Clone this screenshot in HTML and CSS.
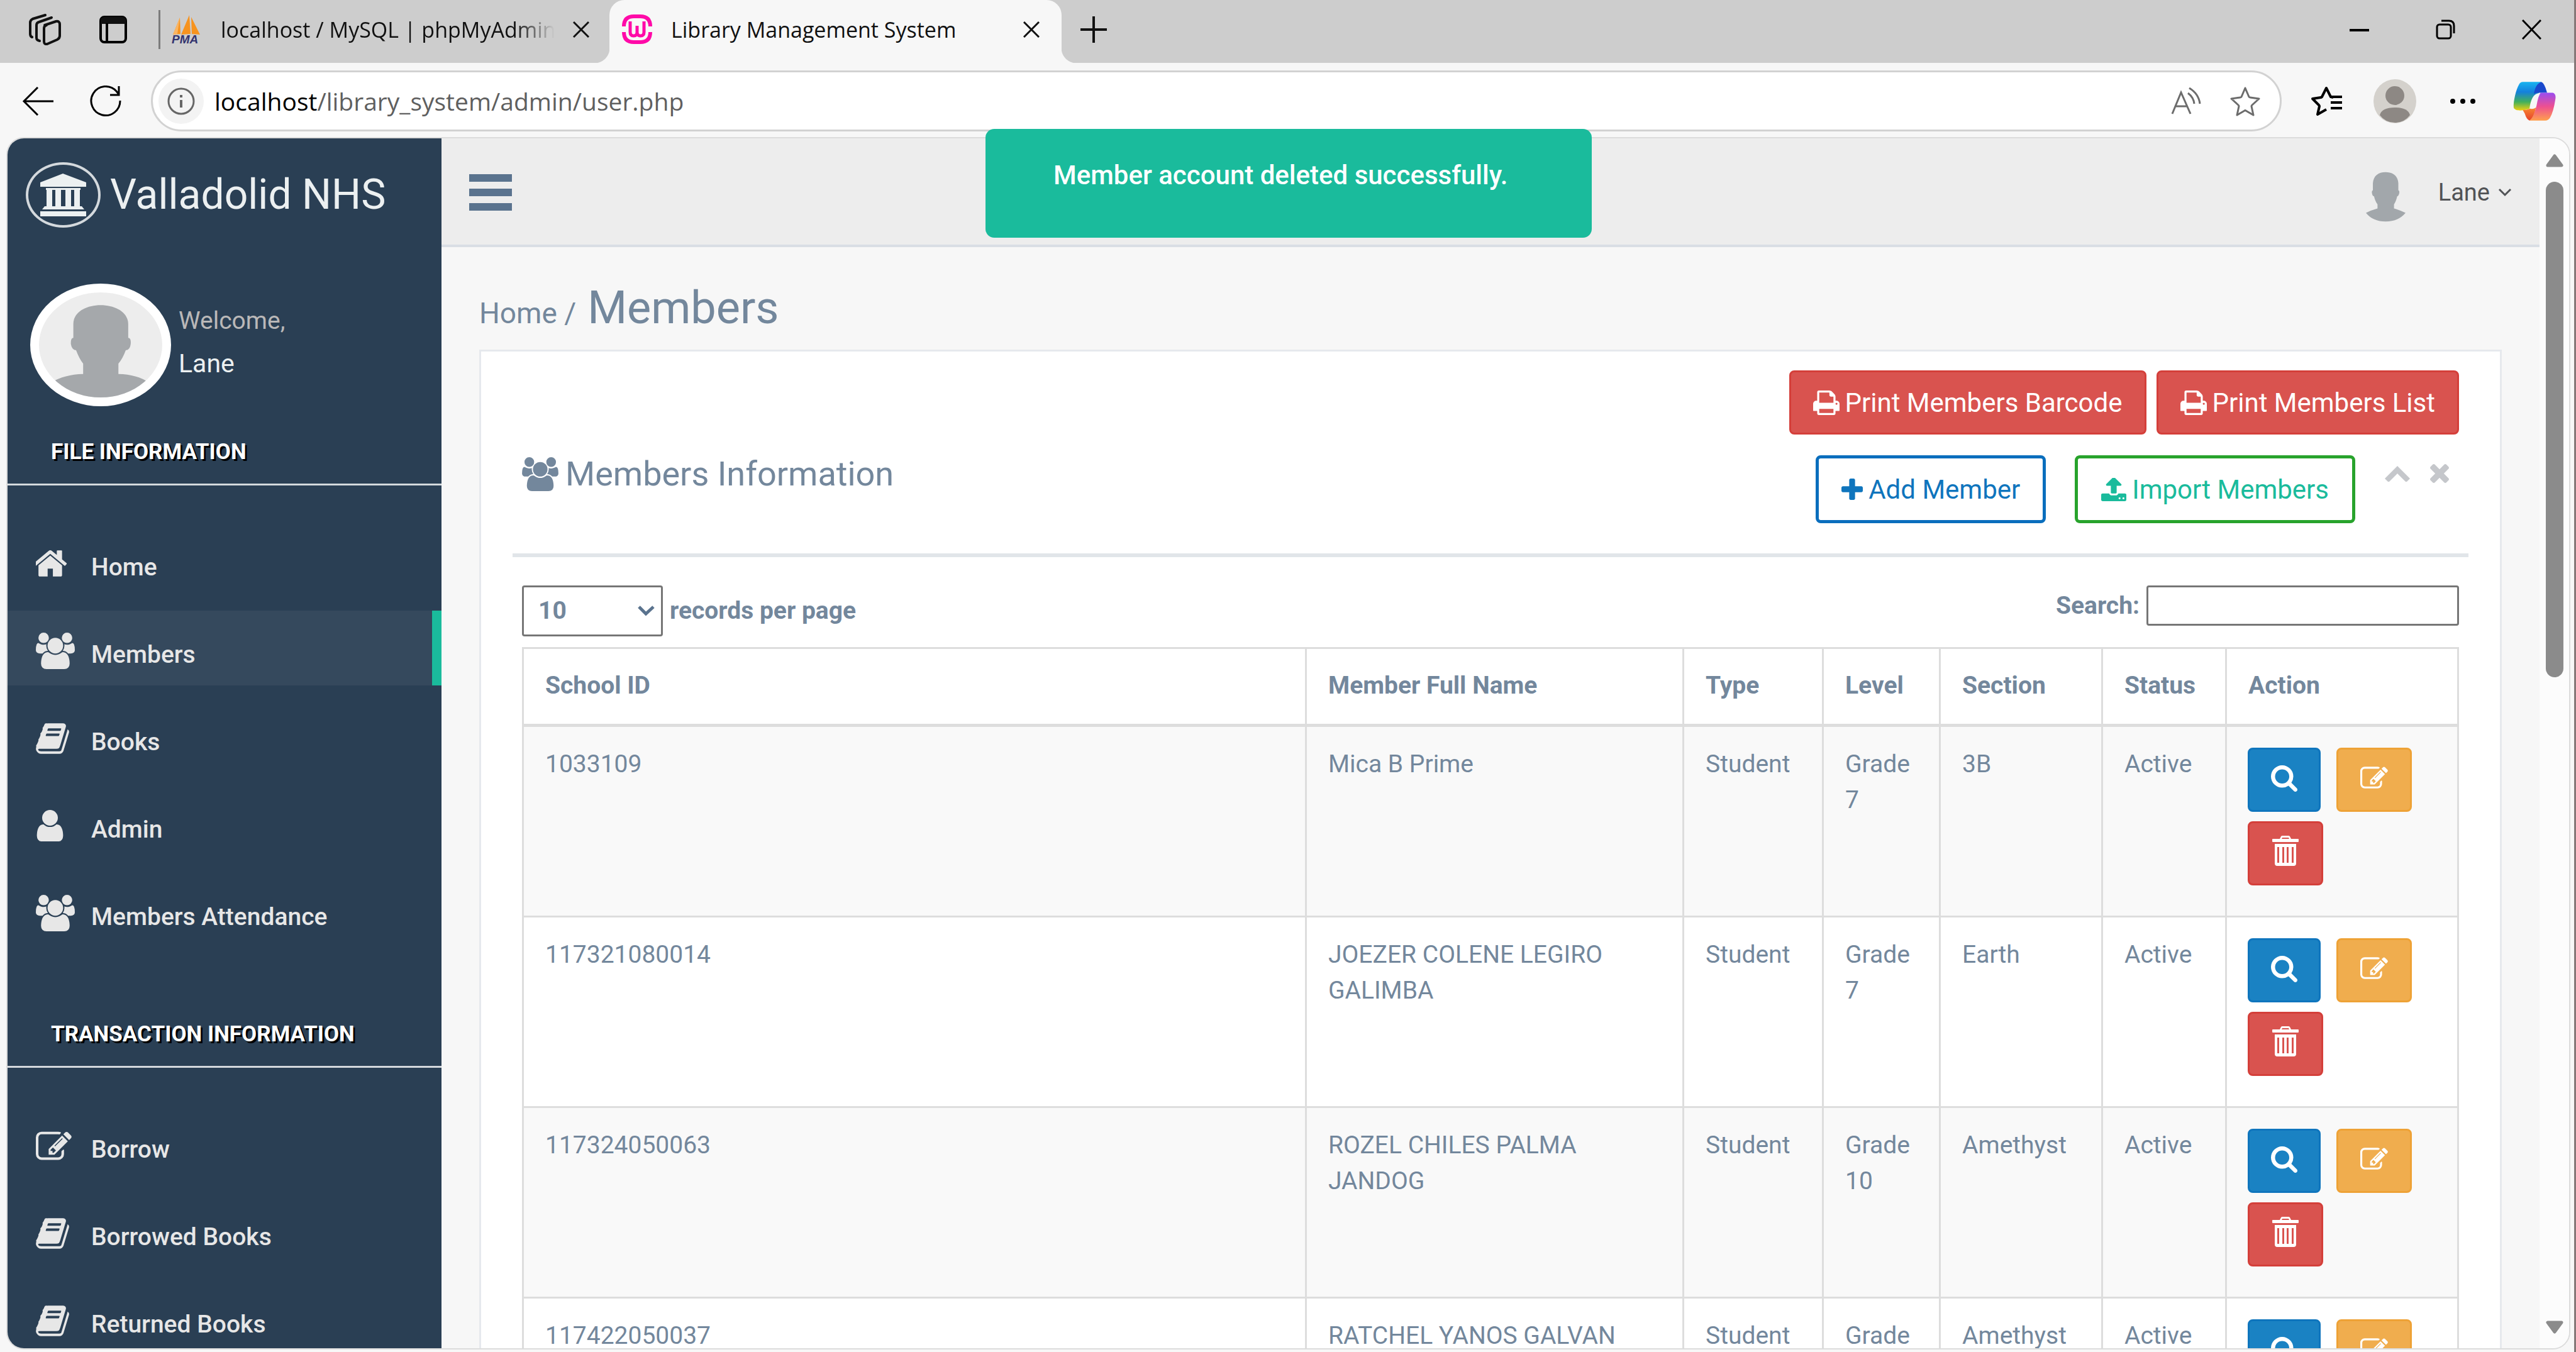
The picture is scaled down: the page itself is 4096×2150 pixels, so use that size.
FILE: index.html
```html
<!DOCTYPE html>
<html lang="en">
<head>
<meta charset="utf-8">
<title>Library Management System</title>
<link rel="stylesheet" href="styles.css">
</head>
<body>

<svg class="sprite" aria-hidden="true">
  <symbol id="home" viewBox="152 250 1488 1290"><path d="M1408 992v480q0 26-19 45t-45 19h-384v-384h-256v384h-384q-26 0-45-19t-19-45v-480q0-1 .5-3t.5-3l575-474 575 474q1 2 1 6zm223-69l-62 74q-8 9-21 11h-3q-13 0-21-7l-692-577-692 577q-12 8-24 7-13-2-21-11l-62-74q-8-10-7-23.5t11-21.5l719-599q32-26 76-26t76 26l244 204v-195q0-14 9-23t23-9h192q14 0 23 9t9 23v408l219 182q10 8 11 21.5t-7 23.5z"/></symbol>
  <symbol id="users" viewBox="0 0 1920 1792"><path d="M593 896q-162 5-265 128h-134q-82 0-138-40.5t-56-118.5q0-353 124-353 6 0 43.5 21t97.5 42.5 119 21.500q67 0 133-23-5 37-5 66 0 139 81 256zm1071 637q0 120-73 189.500t-194 69.500h-874q-121 0-194-69.500t-73-189.500q0-53 3.500-103.500t14-109 26.500-108.500 43-97.500 62-81 85.500-53.500 111.500-20q10 0 43 21.500t73 48 107 48 135 21.500 135-21.500 107-48 73-48 43-21.500q61 0 111.500 20t85.500 53.500 62 81 43 97.500 26.500 108.500 14 109 3.500 103.500zm-1024-1277q0 106-75 181t-181 75-181-75-75-181 75-181 181-75 181 75 75 181zm704 384q0 159-112.500 271.500t-271.500 112.500-271.500-112.500-112.500-271.500 112.500-271.500 271.500-112.500 271.500 112.500 112.500 271.500zm576 225q0 78-56 118.500t-138 40.500h-134q-103-123-265-128 81-117 81-256 0-29-5-66 66 23 133 23 59 0 119-21.500t97.500-42.500 43.500-21q124 0 124 353zm-128-609q0 106-75 181t-181 75-181-75-75-181 75-181 181-75 181 75 75 181z"/></symbol>
  <symbol id="book" viewBox="60 128 1672 1536"><path d="M1703 478q40 57 18 129l-275 906q-19 64-76.5 107.500t-122.500 43.500h-923q-77 0-148.500-53.500t-99.500-131.500q-24-67-2-127 0-4 3-27t4-37q1-8-3-21.500t-3-19.500q2-11 8-21t16.500-23.500 16.500-23.500q23-38 45-91.500t30-91.500q3-10 .5-30t-.5-28q3-11 17-28t17-23q21-36 42-92t25-90q1-9-2.500-32t.5-28q4-13 22-30.500t22-22.500q19-26 42.500-84.500t27.500-96.500q1-8-3-25.500t-2-26.500q2-8 9-18t18-23 17-21q8-12 16.500-30.500t15-35 16-36 19.500-32 26.500-23.500 36-11.500 47.500 5.500l-1 3q38-9 51-9h761q74 0 114 56t18 130l-274 906q-36 119-71.500 153.500t-128.500 34.500h-869q-27 0-38 15-11 16-1 43 24 70 144 70h923q29 0 56-15.500t35-41.500l300-987q7-22 5-57 38 15 59 43zm-1064 2q-4 13 2 22.500t20 9.500h608q13 0 25.500-9.500t16.500-22.500l21-64q4-13-2-22.500t-20-9.500h-608q-13 0-25.500 9.500t-16.500 22.500zm-83 256q-4 13 2 22.500t20 9.500h608q13 0 25.500-9.500t16.500-22.500l21-64q4-13-2-22.500t-20-9.500h-608q-13 0-25.500 9.500t-16.500 22.500z"/></symbol>
  <symbol id="user" viewBox="256 128 1280 1536"><path d="M1536 1399q0 109-62.500 187t-150.500 78h-854q-88 0-150.500-78t-62.500-187q0-85 8.500-160.500t31.500-152 58.500-131 94-89 134.500-34.500q131 128 313 128t313-128q76 0 134.500 34.500t94 89 58.500 131 31.500 152 8.500 160.500zm-256-887q0 159-112.500 271.500t-271.500 112.500-271.500-112.500-112.500-271.500 112.500-271.500 271.500-112.500 271.500 112.500 112.500 271.500z"/></symbol>
  <symbol id="edit" viewBox="0 120 1792 1420"><path d="M888 1184l116-116-152-152-116 116v56h96v96h56zm440-720q-16-16-33 1l-350 350q-17 17-1 33t33-1l350-350q17-17 1-33zm80 594v190q0 119-84.500 203.500t-203.500 84.500h-832q-119 0-203.500-84.500t-84.500-203.500v-832q0-119 84.500-203.500t203.500-84.500h832q63 0 117 25 15 7 18 23 3 17-9 29l-49 49q-14 14-32 8-23-6-45-6h-832q-66 0-113 47t-47 113v832q0 66 47 113t113 47h832q66 0 113-47t47-113v-126q0-13 9-22l64-64q15-15 35-7t20 29zm-96-738l288 288-672 672h-288v-288zm444 132l-92 92-288-288 92-92q28-28 68-28t68 28l152 152q28 28 28 68t-28 68z"/></symbol>
  <symbol id="search" viewBox="64 128 1664 1664"><path d="M1216 832q0-185-131.500-316.500t-316.500-131.500-316.500 131.500-131.500 316.500 131.500 316.500 316.500 131.500 316.500-131.500 131.500-316.500zm512 832q0 52-38 90t-90 38q-54 0-90-38l-343-342q-179 124-399 124-143 0-273.500-55.500t-225-150-150-225-55.500-273.500 55.500-273.500 150-225 225-150 273.500-55.500 273.500 55.500 225 150 150 225 55.500 273.500q0 220-124 399l343 343q37 37 37 90z"/></symbol>
  <symbol id="trash" viewBox="0 0 42 48"><path fill-rule="evenodd" d="M12 5l2-4q1-1 2-1h10q1 0 2 1l2 4h11q1 0 1 1v3q0 1-1 1H1q-1 0-1-1V6q0-1 1-1zM15 5h12l-1-2H16zM4 13h34v31q0 4-4 4H8q-4 0-4-4zM8 18v25h3V18zM16 18v25h3V18zM23 18v25h3V18zM31 18v25h3V18z"/></symbol>
  <symbol id="print" viewBox="64 128 1664 1536"><path d="M448 1536h896v-256h-896v256zm0-640h896v-384h-160q-40 0-68-28t-28-68v-160h-640v640zm1152 64q0-26-19-45t-45-19-45 19-19 45 19 45 45 19 45-19 19-45zm128 0v416q0 13-9.500 22.500t-22.500 9.500h-224v160q0 40-28 68t-68 28h-960q-40 0-68-28t-28-68v-160h-224q-13 0-22.500-9.500t-9.500-22.500v-416q0-79 56.500-135.500t135.500-56.500h64v-544q0-40 28-68t68-28h672q40 0 88 20t76 48l152 152q28 28 48 76t20 88v256h64q79 0 135.500 56.500t56.500 135.500z"/></symbol>
  <symbol id="plus" viewBox="192 128 1408 1408"><path d="M1600 736v192q0 40-28 68t-68 28h-416v416q0 40-28 68t-68 28h-192q-40 0-68-28t-28-68v-416h-416q-40 0-68-28t-28-68v-192q0-40 28-68t68-28h416v-416q0-40 28-68t68-28h192q40 0 68 28t28 68v416h416q40 0 68 28t28 68z"/></symbol>
  <symbol id="times" viewBox="302 366 1188 1188"><path d="M1490 1322q0 40-28 68l-136 136q-28 28-68 28t-68-28l-294-294-294 294q-28 28-68 28t-68-28l-136-136q-28-28-28-68t28-68l294-294-294-294q-28-28-28-68t28-68l136-136q28-28 68-28t68 28l294 294 294-294q28-28 68-28t68 28l136 136q28 28 28 68t-28 68l-294 294 294 294q28 28 28 68z"/></symbol>
  <symbol id="upload" viewBox="64 124 1664 1540"><path d="M1344 1472q0-26-19-45t-45-19-45 19-19 45 19 45 45 19 45-19 19-45zm256 0q0-26-19-45t-45-19-45 19-19 45 19 45 45 19 45-19 19-45zm128-224v320q0 40-28 68t-68 28h-1472q-40 0-68-28t-28-68v-320q0-40 28-68t68-28h427q21 56 70.500 92t110.500 36h256q61 0 110.500-36t70.500-92h427q40 0 68 28t28 68zm-325-648q-17 40-59 40h-256v448q0 26-19 45t-45 19h-256q-26 0-45-19t-19-45v-448h-256q-42 0-59-40-17-39 14-69l448-448q18-19 45-19t45 19l448 448q31 30 14 69z"/></symbol>
  <symbol id="up" viewBox="0 0 40 25"><path d="M20 0l20 20-5 5h-2L20 12 7 25H5L0 20z"/></symbol>
  <symbol id="down" viewBox="0 0 22 14"><path d="M2 2l9 9 9-9" fill="none" stroke="currentColor" stroke-width="3"/></symbol>
  <symbol id="close" viewBox="0 0 26 26"><path d="M1 1l24 24M25 1L1 25" fill="none" stroke="currentColor" stroke-width="3"/></symbol>
  <symbol id="star" viewBox="0 0 50 48"><path d="M25 3l6 14q1 1 2 1l14 2-11 10q-1 1-1 2l3 14-12-7q-1-1-2 0l-12 7 3-14q0-1-1-2L3 20l14-2q1 0 2-1z" fill="none" stroke="currentColor" stroke-width="3" stroke-linejoin="round"/></symbol>
</svg>

<header class="titlebar">
  <button class="chrome-btn workspaces" aria-label="Workspaces"><svg width="52" height="50" viewBox="0 0 52 50" fill="none" stroke="#111" stroke-width="4" stroke-linecap="round" stroke-linejoin="round"><path d="M25 18l18-6q6-1 6 5v18q0 4-4 6l-16 7q-5 1-5-4V23q0-4 4-5z"/><path d="M17 43q-5-1-5-5V18q0-4 4-5l20-7"/><path d="M5 37q-3-1-3-5V14q0-4 4-6l20-6"/></svg></button>
  <button class="chrome-btn tab-actions" aria-label="Tab actions"><svg width="44" height="44" viewBox="0 0 44 44"><rect x="2" y="2" width="40" height="40" rx="6" fill="none" stroke="#000" stroke-width="4"/><path d="M2 13V8q0-6 6-6h28q6 0 6 6v5z"/><path d="M12 12v30" stroke="#000" stroke-width="4"/></svg></button>
  <span class="divider"></span>
  <div class="tab">
    <svg class="favicon" width="48" height="46" viewBox="0 0 48 46"><path d="M2 31L13 4l1 26zM15 31L28 0l2 30zM31 3l14 28-13-1z" fill="#f7931e"/><path d="M2 31L13 4l-4 26z" fill="#fbb562"/><text x="0" y="45" class="pma">PMA</text></svg>
    <span class="tab-title fade">localhost / MySQL | phpMyAdmin</span>
    <button class="chrome-btn" aria-label="Close tab"><svg width="26" height="26"><use href="#close"/></svg></button>
  </div>
  <div class="tab active">
    <svg width="48" height="47" viewBox="0 0 48 47" fill="none" stroke="#ff0aa8"><path d="M3 19q0-16 16-16h10q16 0 16 16M3 28q0 16 16 16h10q16 0 16-16" stroke-width="6"/><path d="M13 11v17q0 6 5.500 6t5.500-6V18v10q0 6 5.500 6t5.500-6V11" stroke-width="5"/></svg>
    <span class="tab-title">Library Management System</span>
    <button class="chrome-btn" aria-label="Close tab"><svg width="26" height="26"><use href="#close"/></svg></button>
  </div>
  <button class="chrome-btn new-tab" aria-label="New tab"><svg width="42" height="42" viewBox="0 0 42 42"><path d="M21 0v42M0 21h42" stroke="#111" stroke-width="4"/></svg></button>
  <div class="window-controls">
    <button class="chrome-btn" aria-label="Minimize"><svg width="31" height="32" viewBox="0 0 31 32"><path d="M0 17h31" stroke="#000" stroke-width="4"/></svg></button>
    <button class="chrome-btn" aria-label="Restore"><svg width="31" height="32" viewBox="0 0 31 32" fill="none" stroke="#000" stroke-width="3"><rect x="2" y="8" width="22" height="22" rx="4"/><path d="M9 2h12q8 0 8 8v12"/></svg></button>
    <button class="chrome-btn" aria-label="Close window"><svg width="31" height="32" viewBox="0 0 31 32"><path d="M1 1l29 30M30 1L1 31" stroke="#000" stroke-width="3"/></svg></button>
  </div>
</header>

<div class="toolbar">
  <button class="chrome-btn back" aria-label="Back"><svg width="50" height="46" viewBox="0 0 50 46" fill="none" stroke="#000" stroke-width="3"><path d="M50 23H3M25 1L3 23l22 22"/></svg></button>
  <button class="chrome-btn reload" aria-label="Refresh"><svg width="50" height="50" viewBox="0 0 50 50" fill="none" stroke="#000" stroke-width="3"><path d="M48 24a23 23 0 1 1-6-15l4 5M46 1v14H32"/></svg></button>
  <div class="address">
    <button class="chrome-btn site-info" aria-label="Site information"><svg width="44" height="44" viewBox="0 0 44 44"><circle cx="22" cy="22" r="20" fill="none" stroke="#666" stroke-width="3"/><path d="M22 20v12M22 12v4" stroke="#666" stroke-width="4"/></svg></button>
    <div class="url"><span class="host">localhost</span>/library_system/admin/user.php</div>
    <button class="chrome-btn" aria-label="Read aloud"><svg width="48" height="44" viewBox="0 0 48 44" fill="none" stroke="#6c6c6c" stroke-width="3"><path d="M2 42L16 8l15 34M7 30h19M27 9q9 7 10 17M29 1q15 9 17 25"/></svg></button>
    <button class="chrome-btn favorite" aria-label="Add to favorites"><svg width="50" height="48"><use href="#star"/></svg></button>
  </div>
  <button class="chrome-btn favorites" aria-label="Favorites"><svg width="50" height="48" viewBox="0 0 50 48" fill="none" stroke="#000" stroke-width="4"><path d="M36 18l-4-1-7-14-7 14q-1 1-2 1L3 20l10 10q1 1 1 2l-3 13 14-8M32 17h18M32 26h18M32 35h18" stroke-linejoin="round"/></svg></button>
  <button class="chrome-btn profile-btn" aria-label="Profile"><svg width="68" height="70" viewBox="0 0 68 70"><ellipse cx="34" cy="35" rx="34" ry="35" fill="#d4d1cc"/><ellipse cx="34" cy="26" rx="15" ry="15" fill="#8d8884"/><path d="M10 57q3-12 24-12t24 12q-9 12-24 12T10 57z" fill="#8d8884"/></svg></button>
  <button class="chrome-btn more" aria-label="Settings and more"><svg width="40" height="8" viewBox="0 0 40 8"><circle cx="4" cy="4" r="4"/><circle cx="20" cy="4" r="4"/><circle cx="36" cy="4" r="4"/></svg></button>
  <button class="chrome-btn" aria-label="Copilot"><svg width="68" height="62" viewBox="1352 411 146 194" preserveAspectRatio="none">
    <defs>
      <linearGradient id="cpA" x1="0" y1="0" x2="0" y2="1"><stop offset="0" stop-color="#18b4f0"/><stop offset=".35" stop-color="#1480dc"/><stop offset=".7" stop-color="#42b05c"/><stop offset="1" stop-color="#f0d010"/></linearGradient>
      <linearGradient id="cpB" x1="0" y1="0" x2="0" y2="1"><stop offset="0" stop-color="#9a4cf0"/><stop offset=".5" stop-color="#ee5090"/><stop offset="1" stop-color="#ffa04c"/></linearGradient>
      <linearGradient id="cpC" x1="0" y1="0" x2="0" y2="1"><stop offset="0" stop-color="#f88a30"/><stop offset="1" stop-color="#e6402c"/></linearGradient>
    </defs>
    <path d="M1385 412H1448L1440 467C1420 472 1412 500 1408 545C1395 553 1360 562 1354 540C1352 510 1362 450 1372 425Q1377 412 1385 412z" fill="url(#cpA)"/>
    <path d="M1448 412q11 4 20 54h-28q-13-2-17 8 4-50 25-62z" fill="#1a48cc"/>
    <path d="M1385 552q14 0 25-7 10 4 20-6-8 56-22 65-10-4-16-34z" fill="url(#cpC)"/>
    <path d="M1446 466H1488Q1500 472 1496 500Q1490 560 1478 590Q1472 604 1462 604H1408Q1422 590 1432 530Q1438 480 1446 466z" fill="url(#cpB)"/></svg></button>
</div>

<div class="viewport">
  <aside class="sidebar">
    <a class="brand" href="#">
      <span class="brand-logo"><svg width="73" height="68" viewBox="0 0 73 68"><path d="M36 0l37 14v7H0v-7zM9 23h55v3H9zM10 26h9v26h-9zM24 26h9v26h-9zM40 26h9v26h-9zM54 26h9v26h-9zM7 52h59l4 5H3zM0 60h73v8H0z"/></svg></span>
      <span>Valladolid NHS</span>
    </a>
    <div class="profile">
      <svg class="profile-pic" viewBox="131 158 402 305" preserveAspectRatio="none"><path d="M243 290V250C243 215 285 195 332 195S422 215 422 250V290Q432 290 430 308Q428 325 414 326Q404 350 390 365V395Q450 396 490 420V470H170V420Q215 396 275 395V365Q262 350 252 326Q238 325 235 308Q234 290 243 290z" fill="#a5a8ab"/></svg>
      <div class="profile-info"><span class="welcome">Welcome,</span><span class="name">Lane</span></div>
    </div>

    <h3 class="menu-heading">File Information</h3>
    <nav class="menu">
      <a href="#"><svg width="50" height="42"><use href="#home"/></svg>Home</a>
      <a href="#" class="current"><svg width="62" height="58"><use href="#users"/></svg>Members</a>
      <a href="#"><svg width="53" height="49"><use href="#book"/></svg>Books</a>
      <a href="#"><svg width="45" height="50"><use href="#user"/></svg>Admin</a>
      <a href="#"><svg width="62" height="58"><use href="#users"/></svg>Members Attendance</a>
    </nav>

    <h3 class="menu-heading later">Transaction Information</h3>
    <nav class="menu">
      <a href="#"><svg width="57" height="46"><use href="#edit"/></svg>Borrow</a>
      <a href="#"><svg width="53" height="49"><use href="#book"/></svg>Borrowed Books</a>
      <a href="#"><svg width="53" height="49"><use href="#book"/></svg>Returned Books</a>
    </nav>
  </aside>

  <div class="content">
    <div class="topbar">
      <button class="menu-toggle" aria-label="Toggle menu"><span></span><span></span><span></span></button>
      <a class="account" href="#">
        <svg width="63" height="80" viewBox="838 868 137 249" preserveAspectRatio="none"><path d="M862 960V925C864 888 880 870 906 870S948 888 950 925V960Q955 962 953 975Q951 988 946 990Q942 1015 935 1030V1050Q955 1058 975 1072Q950 1115 906 1115T838 1072Q857 1058 878 1050V1030Q870 1015 866 990Q860 988 859 975Q857 962 862 960z" fill="#a2a7ab"/></svg>
        <span>Lane</span>
        <svg class="caret" width="22" height="14"><use href="#down"/></svg>
      </a>
    </div>

    <main class="main">
      <h1 class="page-title"><a href="#">Home /</a><span>Members</span></h1>

      <section class="panel">
        <div class="print-row">
          <button class="btn danger"><svg width="42" height="39"><use href="#print"/></svg>Print Members Barcode</button>
          <button class="btn danger"><svg width="42" height="39"><use href="#print"/></svg>Print Members List</button>
        </div>
        <div class="panel-head">
          <h2><svg width="58" height="54"><use href="#users"/></svg>Members Information</h2>
          <button class="btn outline add"><svg width="34" height="34"><use href="#plus"/></svg>Add Member</button>
          <button class="btn outline import"><svg width="40" height="37"><use href="#upload"/></svg>Import Members</button>
          <div class="panel-tools">
            <button aria-label="Collapse"><svg width="40" height="25"><use href="#up"/></svg></button>
            <button aria-label="Close"><svg width="30" height="30"><use href="#times"/></svg></button>
          </div>
        </div>

        <div class="panel-body">
          <div class="table-controls">
            <div class="length">
              <span class="select"><select id="length"><option>10</option></select><svg width="29" height="19" viewBox="0 0 29 19"><path d="M3 3l11 11L26 3" fill="none" stroke="#5a738e" stroke-width="5"/></svg></span>
              <label for="length">records per page</label>
            </div>
            <div class="filter"><label for="filter">Search:</label><input id="filter" type="text"></div>
          </div>

          <table class="members">
            <colgroup><col><col class="c-name"><col class="c-type"><col class="c-level"><col class="c-section"><col class="c-status"><col class="c-action"></colgroup>
            <thead><tr><th>School ID</th><th>Member Full Name</th><th>Type</th><th>Level</th><th>Section</th><th>Status</th><th>Action</th></tr></thead>
            <tbody>
              <tr><td>1033109</td><td>Mica B Prime</td><td>Student</td><td>Grade 7</td><td>3B</td><td>Active</td>
                <td><div class="actions"><button class="act view" aria-label="View"><svg width="42" height="42"><use href="#search"/></svg></button><button class="act edit" aria-label="Edit"><svg width="44" height="35"><use href="#edit"/></svg></button><button class="act delete" aria-label="Delete"><svg width="42" height="48"><use href="#trash"/></svg></button></div></td></tr>
              <tr><td>117321080014</td><td>JOEZER COLENE LEGIRO GALIMBA</td><td>Student</td><td>Grade 7</td><td>Earth</td><td>Active</td>
                <td><div class="actions"><button class="act view" aria-label="View"><svg width="42" height="42"><use href="#search"/></svg></button><button class="act edit" aria-label="Edit"><svg width="44" height="35"><use href="#edit"/></svg></button><button class="act delete" aria-label="Delete"><svg width="42" height="48"><use href="#trash"/></svg></button></div></td></tr>
              <tr><td>117324050063</td><td>ROZEL CHILES PALMA JANDOG</td><td>Student</td><td>Grade 10</td><td>Amethyst</td><td>Active</td>
                <td><div class="actions"><button class="act view" aria-label="View"><svg width="42" height="42"><use href="#search"/></svg></button><button class="act edit" aria-label="Edit"><svg width="44" height="35"><use href="#edit"/></svg></button><button class="act delete" aria-label="Delete"><svg width="42" height="48"><use href="#trash"/></svg></button></div></td></tr>
              <tr><td>117422050037</td><td>RATCHEL YANOS GALVAN</td><td>Student</td><td>Grade</td><td>Amethyst</td><td>Active</td>
                <td><div class="actions"><button class="act view" aria-label="View"><svg width="42" height="42"><use href="#search"/></svg></button><button class="act edit" aria-label="Edit"><svg width="44" height="35"><use href="#edit"/></svg></button></div></td></tr>
            </tbody>
          </table>
        </div>
      </section>
    </main>
  </div>

  <div class="scrollbar" aria-hidden="true">
    <svg width="28" height="21" viewBox="0 0 28 21"><path d="M14 3l11 15H3z" fill="#8b8b8b" stroke="#8b8b8b" stroke-width="5" stroke-linejoin="round"/></svg>
    <span class="thumb"></span>
    <svg width="28" height="21" viewBox="0 0 28 21"><path d="M14 18L3 3h22z" fill="#8b8b8b" stroke="#8b8b8b" stroke-width="5" stroke-linejoin="round"/></svg>
  </div>
</div>

<div class="toast" role="status">Member account deleted successfully.</div>

</body>
</html>
```
FILE: styles.css
```css
* { box-sizing: border-box; }

body {
  margin: 0;
  height: 100vh;
  overflow: hidden;
  display: flex;
  flex-direction: column;
  background: #f7f7f7;
  border-right: 3px solid #857878;
  font: 400 39px/57px Roboto, sans-serif;
  color: #73879c;
}

svg { display: block; fill: currentColor; flex: none; }
svg[fill="none"] { fill: none; }
button { font: inherit; color: inherit; margin: 0; padding: 0; border: 0; background: none; display: block; }
a { color: inherit; text-decoration: none; }
h1, h2, h3 { margin: 0; font-weight: 400; }
.sprite { position: absolute; width: 0; height: 0; }

/* Browser tab strip */
.titlebar {
  flex: none;
  height: 100px;
  display: flex;
  align-items: center;
  background: #cdcdcd;
  color: #111;
  font: 400 34px/50px "Open Sans", sans-serif;
}
.titlebar > *, .tab > * { margin-bottom: 7px; }
.workspaces { margin-left: 46px; }
.tab-actions { margin-left: 60px; }
.divider { width: 3px; height: 62px; margin-left: 50px; background: #7c7c7c; }
.titlebar > .tab { height: 100px; margin-bottom: 0; display: flex; align-items: center; padding: 0 32px 0 18px; width: 714px; }
.favicon { overflow: visible; }
.tab-title { flex: 1; margin-left: 30px; white-space: nowrap; overflow: hidden; }
.tab .chrome-btn { margin-left: 29px; }
.fade { -webkit-mask-image: linear-gradient(to right, #000 88%, transparent); mask-image: linear-gradient(to right, #000 88%, transparent); }
.pma { font: italic 700 19px "Liberation Sans", sans-serif; fill: #33336e; }
.titlebar > .tab.active {
  width: 719px;
  padding: 0 35px 0 20px;
  background: #f7f7f7;
  border-radius: 24px 24px 0 0;
  position: relative;
}
.tab.active::before, .tab.active::after { content: ""; position: absolute; bottom: 0; width: 24px; height: 24px; margin: 0; }
.tab.active::before { right: 100%; background: radial-gradient(circle at 0 0, transparent 24px, #f7f7f7 25px); }
.tab.active::after { left: 100%; background: radial-gradient(circle at 100% 0, transparent 24px, #f7f7f7 25px); }
.new-tab { margin-left: 30px; }
.window-controls { margin-left: auto; padding-right: 52px; display: flex; gap: 106px; }

/* Address row */
.toolbar { flex: none; height: 118px; padding: 3px 29px 0 35px; display: flex; align-items: center; color: #000; }
.reload { margin-left: 58px; }
.address {
  flex: 1;
  height: 97px;
  margin: 0 46px 0 47px;
  padding: 0 30px 0 9px;
  display: flex;
  align-items: center;
  background: #fff;
  border: 3px solid #d2d2d2;
  border-radius: 49px;
  color: #6c6c6c;
}
.site-info { width: 72px; height: 72px; border-radius: 50%; background: #f3f3f3; display: grid; place-items: center; }
.url { flex: 1; margin-left: 17px; font: 400 39px/56px "Open Sans", sans-serif; color: #5f5f5f; }
.host { color: #000; }
.favorite { margin-left: 45px; }
.profile-btn { margin-left: 50px; }
.more { margin: 0 60px 0 54px; }

/* Page viewport */
.viewport {
  flex: 1;
  min-height: 0;
  margin: 0 6px 4px 10px;
  display: flex;
  overflow: hidden;
  border: 2px solid #dcdcdc;
  border-radius: 28px;
}

.sidebar { flex: none; width: 690px; background: #2a3f54; color: #e7e7e7; }
.brand { display: flex; align-items: center; gap: 15px; padding: 38px 0 0 29px; font-size: 66px; line-height: 104px; color: #ecf0f1; }
.brand-logo { width: 119px; height: 104px; border: 4px solid #d4d9dd; border-radius: 50%; display: grid; place-items: center; }
.profile { display: flex; gap: 12px; margin: 89px 0 0 36px; }
.profile-pic { width: 224px; height: 195px; border: 14px solid #fff; border-radius: 50%; background: #ededed; }
.profile-info { display: flex; flex-direction: column; padding-top: 25px; line-height: 68px; }
.welcome { color: #bab8b8; }
.name { font-size: 41px; color: #ecf0f1; }
.menu-heading {
  margin-top: 53px;
  padding: 0 0 30px 69px;
  border-bottom: 3px solid #d4d9dd;
  font-size: 35px;
  line-height: 40px;
  font-weight: 700;
  text-transform: uppercase;
  color: #fff;
  text-shadow: 3px 3px 0 #000;
}
.menu-heading.later { margin-top: 118px; }
.menu { margin-top: 60px; display: flex; flex-direction: column; gap: 20px; }
.menu a {
  height: 119px;
  padding: 22px 0 0 45px;
  display: grid;
  grid-template-columns: 88px 1fr;
  align-items: center;
  font-weight: 500;
}
.menu svg { margin-bottom: 13px; }
.menu .current { background: #35495d; border-right: 15px solid #1abb9c; }

.content { flex: 1; min-width: 0; }
.topbar {
  height: 173px;
  padding: 3px 44px 0 44px;
  display: flex;
  justify-content: space-between;
  align-items: center;
  background: #ededed;
  border-bottom: 4px solid #d9dee4;
}
.menu-toggle { width: 68px; display: grid; gap: 11px; }
.menu-toggle span { height: 12px; background: #5a738e; }
.account { display: flex; align-items: center; color: #515356; font-size: 38px; }
.account > svg:first-child { margin: 14px 52px 0 0; }
.caret { margin-left: 13px; }

.main { padding: 57px 60px 0 60px; }
.page-title { display: flex; align-items: baseline; gap: 18px; font-size: 72px; line-height: 80px; }
.page-title a { font-size: 46px; line-height: 57px; }

.panel { margin-top: 26px; padding: 30px 50px; background: #fff; border: 3px solid #e6e9ed; }
.print-row { display: flex; justify-content: flex-end; gap: 16px; padding-right: 15px; }
.btn { display: flex; align-items: center; gap: 9px; border-radius: 8px; font-size: 42px; line-height: 57px; }
.btn.danger { height: 102px; padding: 0 35px; background: #d9534f; border: 3px solid #d43f3a; color: #fff; }
.panel-head {
  display: flex;
  align-items: flex-start;
  padding: 33px 15px 48px;
  border-bottom: 6px solid #e1e5e9;
}
.panel-head h2 { flex: 1; display: flex; align-items: center; gap: 11px; font-size: 54px; line-height: 60px; }
.btn.outline { height: 108px; padding: 0 36px; background: #fff; border: 5px solid; }
.btn.add { color: #0f75bd; border-color: #0a6ebd; }
.btn.import { margin-left: 46px; padding: 0 37px; color: #1abb9c; border-color: #28a32c; }
.panel-tools { display: flex; align-items: center; gap: 32px; margin: 14px 16px 0 47px; color: #c5c7cb; }

.panel-body { padding: 45px 15px 0; }
.table-controls { display: flex; justify-content: space-between; align-items: flex-start; margin-bottom: 17px; font-weight: 700; }
.length, .filter { display: flex; align-items: center; gap: 11px; }
.select { display: grid; align-items: center; }
.select > * { grid-area: 1 / 1; }
.select svg { justify-self: end; margin-right: 12px; }
select {
  appearance: none;
  width: 224px;
  height: 81px;
  padding: 0 23px;
  font: inherit;
  color: inherit;
  background: #fff;
  border: 3px solid #767676;
  border-radius: 4px;
}
.filter input { width: 497px; height: 64px; padding: 0 8px; font: inherit; color: inherit; background: #fff; border: 3px solid #767676; border-radius: 4px; }

.members { width: 100%; table-layout: fixed; border-collapse: separate; border-spacing: 0; border: solid #ddd; border-width: 3px 0 0 3px; }
.c-name { width: 600px; }
.c-type { width: 222px; }
.c-level { width: 186px; }
.c-section { width: 258px; }
.c-status { width: 197px; }
.c-action { width: 369px; }
th, td { padding: 31px 30px 32px 34px; text-align: left; vertical-align: top; border: solid #ddd; border-width: 0 3px 3px 0; }
th { padding-top: 30px; border-bottom-width: 5px; font-weight: 700; }
tbody tr:nth-child(odd) { background: #f9f9f9; }
td:last-child { padding: 33px 33px 48px 33px; }
.actions { display: flex; flex-wrap: wrap; gap: 15px 25px; }
.act { width: 120px; height: 102px; padding-bottom: 8px; border: 3px solid; border-radius: 8px; display: grid; place-items: center; }
.act svg { color: #fff; }
.view { width: 116px; padding-bottom: 4px; background: #1a82c3; border-color: #0f75bd; }
.edit { background: #f0ad4e; border-color: #eea236; }
.delete { background: #d9534f; border-color: #d43f3a; }

.scrollbar { flex: none; width: 47px; padding: 25px 0 23px; display: flex; flex-direction: column; align-items: center; background: #fcfcfc; }
.thumb { width: 28px; height: 42%; margin: 23px 0 auto; border-radius: 14px; background: #8b8b8b; }

.toast {
  position: absolute;
  top: 205px;
  left: calc(50% - 481px);
  width: 964px;
  height: 173px;
  padding: 45px 0 0 108px;
  background: #1abb9c;
  border-radius: 14px;
  color: #fff;
  font-size: 42px;
  line-height: 58px;
  font-weight: 500;
}
```
